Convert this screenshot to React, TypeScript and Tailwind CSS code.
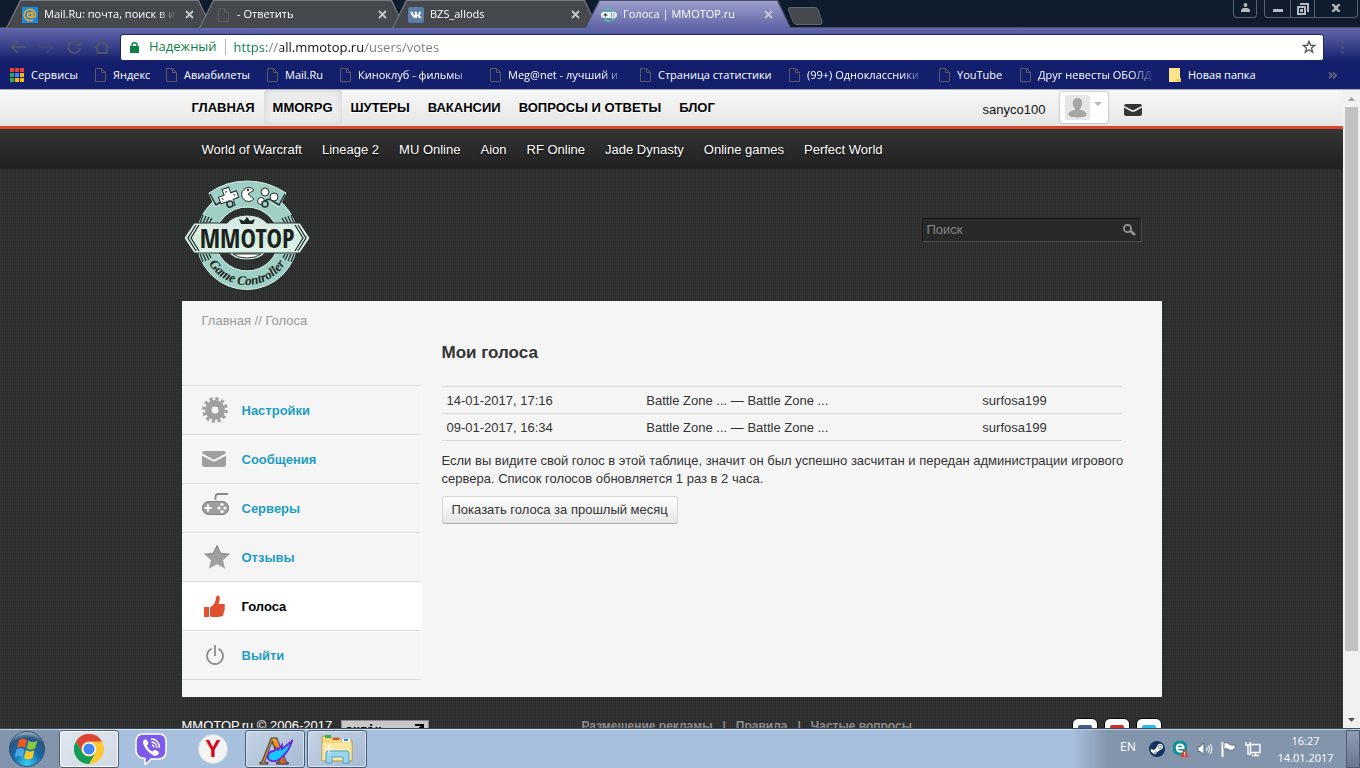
import type { ReactNode } from 'react';
import { FaSteamSymbol, FaVk } from 'react-icons/fa';

const uiFont = "font-['Open_Sans','Noto_Sans',sans-serif]";

const DocIcon = () => (
  <svg className="w-[11px] h-[14px] shrink-0" viewBox="0 0 11 14" fill="none" stroke="#5b5b5b">
    <path d="M.5 .5h6l4 4v9h-10z M6.5 .5v4h4" />
  </svg>
);

const MailRuIcon = () => (
  <svg className="w-4 h-4" viewBox="0 0 16 16">
    <rect width="16" height="16" rx="1" fill="#168de2" />
    <g fill="none" stroke="#ffa61a" strokeWidth="1.6">
      <circle cx="8" cy="8" r="2.4" />
      <path d="M10.4 5.4v3.4c0 2.2 3 2 3-.8a5.6 5.6 0 1 0-2.4 4.6" />
    </g>
  </svg>
);

const VkIcon = () => (
  <span className="w-4 h-4 rounded-[2px] bg-[#5b7fa6] flex items-center justify-center">
    <FaVk className="w-3 h-3 text-white" />
  </span>
);

const PadIcon = () => (
  <svg className="w-4 h-4" viewBox="0 0 16 16">
    <circle cx="8" cy="8" r="6" fill="none" stroke="#54b9a6" strokeWidth="2.4" strokeDasharray="6 2" />
    <rect x="0" y="5" width="16" height="6" rx="3" fill="#e4f7f0" />
    <path d="M2.5 8h4M4.5 6.3v3.4M10 7h1M12.500 7h1M10 9h1M12.500 9h1" stroke="#20302f" />
  </svg>
);

interface TabProps {
  icon: ReactNode;
  title: string;
  active?: boolean;
}

function BrowserTab({ icon, title, active }: TabProps) {
  return (
    <div
      className={`relative w-[206px] h-7 -ml-[13px] first:ml-0 shrink pt-px px-px [clip-path:polygon(14px_0,193px_0,206px_100%,0_100%)] ${
        active ? 'z-10 bg-[#4a4f6c]' : 'bg-[#777a80]'
      }`}
    >
      <div
        className={`h-full flex items-center pl-[15px] pr-[17px] text-white [clip-path:polygon(14px_0,191px_0,204px_100%,0_100%)] ${
          active ? 'bg-linear-to-b from-[#9c9fca] to-[#6165a8]' : 'bg-[#45484c]'
        }`}
      >
        <span className="w-4 flex justify-center shrink-0">{icon}</span>
        <span className="ml-[6px] flex-1 overflow-hidden whitespace-nowrap text-[11px] [mask-image:linear-gradient(90deg,#000_85%,transparent)]">
          {title}
        </span>
        <button aria-label="Закрыть вкладку" className="ml-2 shrink-0">
          <svg className="w-[9px] h-[9px]" viewBox="0 0 9 9" stroke="#c6c8cc" strokeWidth="1.8">
            <path d="M1 1l7 7M8 1l-7 7" />
          </svg>
        </button>
      </div>
    </div>
  );
}

function TabStrip() {
  return (
    <div className="flex h-7 bg-[#0f1c2e] border-b border-[#4b5068]">
      <div className="flex pl-[6px]">
        <BrowserTab icon={<MailRuIcon />} title="Mail.Ru: почта, поиск в и" />
        <BrowserTab icon={<DocIcon />} title=" - Ответить" />
        <BrowserTab icon={<VkIcon />} title="BZS_allods" />
        <BrowserTab icon={<PadIcon />} title="Голоса | MMOTOP.ru" active />
      </div>
      <button aria-label="Новая вкладка" className="mt-[7px] -ml-1 w-9 h-[18px]">
        <svg className="w-9 h-[18px]" viewBox="0 0 36 18">
          <path d="M3 .5h25q2 0 3 2l4 12q1 3-2 3H10q-3 0-4-3L1.500 3q-1-2.500 1.500-2.500z" fill="#45484c" stroke="#62666d" />
        </svg>
      </button>
      <div className="ml-auto mr-[2px] flex items-start">
        <button aria-label="Пользователь" className="w-6 h-[18px] mr-[7px] border border-t-0 border-[#59626f] rounded-b flex justify-center pt-[3px]">
          <svg className="w-[9px] h-[9px]" viewBox="0 0 9 9" fill="#b3b9c3">
            <circle cx="4.500" cy="2" r="1.900" />
            <path d="M0 9V7.500q0-2 2.500-2.500h4Q9 5.500 9 7.500V9z" />
          </svg>
        </button>
        <div className="flex h-[18px] border border-t-0 border-[#59626f] rounded-b">
          <button aria-label="Свернуть" className="w-[25px] flex justify-center">
            <span className="mt-[9px] w-[10px] h-[3px] bg-[#b3b9c3]" />
          </button>
          <button aria-label="Восстановить" className="w-[25px] flex justify-center border-x border-[#59626f] pt-[3px]">
            <svg className="w-3 h-3" viewBox="0 0 12 12" fill="none" stroke="#b3b9c3" strokeWidth="2">
              <path d="M4 2V1h7v7h-1" />
              <path d="M1 4h7v7H1zM4 7h1v1H4z" />
            </svg>
          </button>
          <button aria-label="Закрыть" className="w-[42px] flex justify-center pt-1">
            <svg className="w-[10px] h-2" viewBox="0 0 10 8" stroke="#b3b9c3" strokeWidth="2.400">
              <path d="M1.500 0l7 8M8.500 0l-7 8" />
            </svg>
          </button>
        </div>
      </div>
    </div>
  );
}

function Toolbar() {
  return (
    <div className="h-9 flex items-center pl-[10px] pt-[2px]">
      <div className="flex items-center gap-3 text-[#4f526c]">
        <button aria-label="Назад">
          <svg className="w-4 h-4" viewBox="0 0 16 16" fill="none" stroke="currentColor" strokeWidth="2">
            <path d="M15 8H2.500M8 2L2 8l6 6" />
          </svg>
        </button>
        <button aria-label="Вперёд" className="opacity-40">
          <svg className="w-4 h-4" viewBox="0 0 16 16" fill="none" stroke="currentColor" strokeWidth="2">
            <path d="M1 8h12.500M8 2l6 6-6 6" />
          </svg>
        </button>
        <button aria-label="Обновить">
          <svg className="w-4 h-4" viewBox="0 0 16 16" fill="none" stroke="currentColor" strokeWidth="2">
            <path d="M13 4.500A6 6 0 1 0 14 9" />
            <path d="M9 7h5.500V1.500z" fill="currentColor" stroke="none" />
          </svg>
        </button>
        <button aria-label="Домашняя страница">
          <svg className="w-4 h-4" viewBox="0 0 16 16" fill="none" stroke="currentColor" strokeWidth="2">
            <path d="M1 9L8 2l7 7M3.500 8v6h9V8" />
          </svg>
        </button>
      </div>
      <div className="ml-[10px] flex-1 h-[27px] flex items-center bg-white border border-[#1d2463] rounded-[3px] pl-[9px]">
        <svg className="w-[9px] h-[11px]" viewBox="0 0 9 11">
          <path d="M0 4h9v7H0z" fill="#0b8043" />
          <path d="M2 5V3q0-2.300 2.500-2.300T7 3v2" fill="none" stroke="#0b8043" strokeWidth="1.400" />
        </svg>
        <span className="ml-[10px] text-[13px] text-[#0b8043]">Надежный</span>
        <span className="mx-2 w-px h-4 bg-[#b9b9b9]" />
        <input
          aria-label="Адресная строка"
          defaultValue="https://all.mmotop.ru/users/votes"
          className="flex-1 min-w-0 h-full text-[13px] outline-none text-transparent bg-clip-text bg-[linear-gradient(90deg,#0b8043_33px,#7b7b7b_33px,#7b7b7b_46px,#111_46px,#111_130px,#7b7b7b_130px)]"
        />
        <button aria-label="Добавить в закладки" className="mr-[7px]">
          <svg className="w-[14px] h-[14px]" viewBox="0 0 14 14" fill="none" stroke="#555" strokeWidth="1.300">
            <path d="M7 1.300l1.600 4h4.200L9.500 8l1.200 4.300L7 9.800l-3.700 2.500L4.500 8 1.200 5.300h4.200z" />
          </svg>
        </button>
      </div>
      <button aria-label="Меню" className="w-9 flex justify-center">
        <svg className="w-[3px] h-[13px]" viewBox="0 0 3 13" fill="#4d5070">
          <circle cx="1.500" cy="1.500" r="1.500" />
          <circle cx="1.500" cy="6.500" r="1.500" />
          <circle cx="1.500" cy="11.500" r="1.500" />
        </svg>
      </button>
    </div>
  );
}

const bookmarks = [
  { label: 'Яндекс', width: 'w-[71px]' },
  { label: 'Авиабилеты', width: 'w-[101px]' },
  { label: 'Mail.Ru', width: 'w-[73px]' },
  { label: 'Киноклуб - фильмы', width: 'w-[150px]', fade: true },
  { label: 'Meg@net - лучший и', width: 'w-[150px]', fade: true },
  { label: 'Страница статистики', width: 'w-[149px]' },
  { label: '(99+) Одноклассники', width: 'w-[150px]', fade: true },
  { label: 'YouTube', width: 'w-[81px]' },
  { label: 'Друг невесты ОБОЛД', width: 'w-[149px]', fade: true },
];

function BookmarksBar() {
  return (
    <div className="h-[25px] flex items-center pl-[10px] pb-[3px] text-[11px] text-white whitespace-nowrap overflow-hidden">
      <a href="#" className="flex items-center w-[85px] shrink-0">
        <svg className="w-[14px] h-[14px] mr-[7px]" viewBox="0 0 14 14">
          <path d="M0 0h4v4H0zM5 0h4v4H5zM10 0h4v4h-4z" fill="#ea4335" />
          <path d="M0 5h4v4H0zM0 10h4v4H0z" fill="#34a853" />
          <path d="M5 5h4v4H5z" fill="#4285f4" />
          <path d="M10 5h4v4h-4zM5 10h4v4H5zM10 10h4v4h-4z" fill="#fbbc05" />
        </svg>
        Сервисы
      </a>
      {bookmarks.map((b) => (
        <a key={b.label} href="#" className={`flex items-center shrink-0 pr-[14px] ${b.width}`}>
          <DocIcon />
          <span
            className={`ml-[7px] ${
              b.fade ? 'flex-1 overflow-hidden [mask-image:linear-gradient(90deg,#000_80%,transparent)]' : ''
            }`}
          >
            {b.label}
          </span>
        </a>
      ))}
      <a href="#" className="flex items-center shrink-0">
        <svg className="w-3 h-[14px] mr-[7px]" viewBox="0 0 12 14">
          <path d="M0 0h11v10h1v4H0z" fill="#ffe48a" />
          <path d="M8 14v-3h4v3z" fill="#f2c744" />
        </svg>
        Новая папка
      </a>
      <button aria-label="Другие закладки" className="ml-auto mr-[23px]">
        <svg className="w-[9px] h-[7px]" viewBox="0 0 9 7" fill="none" stroke="#62637a" strokeWidth="1.800">
          <path d="M1 .5l3 3-3 3M5 .5l3 3-3 3" />
        </svg>
      </button>
    </div>
  );
}

const mainMenu = ['ГЛАВНАЯ', 'MMORPG', 'ШУТЕРЫ', 'ВАКАНСИИ', 'ВОПРОСЫ И ОТВЕТЫ', 'БЛОГ'];
const games = ['World of Warcraft', 'Lineage 2', 'MU Online', 'Aion', 'RF Online', 'Jade Dynasty', 'Online games', 'Perfect World'];

const Envelope = ({ className, line }: { className: string; line: string }) => (
  <svg className={className} viewBox="0 0 24 16" fill="currentColor">
    <rect width="24" height="16" rx="3" />
    <path d="M0 3.500l9.500 5.200q2.500 1.400 5 0L24 3.500" fill="none" stroke={line} strokeWidth="2" />
  </svg>
);

function SiteHeader() {
  return (
    <header>
      <div className="h-[39px] bg-linear-to-b from-[#f7f7f7] to-[#e6e6e6] border-b-3 border-[#dd4529]">
        <div className="w-[980px] max-w-full mx-auto h-full flex">
          <nav className="flex h-[35px] pl-px">
            {mainMenu.map((item) => (
              <a
                key={item}
                href="#"
                className={`px-[9px] text-[13px] leading-9 font-bold text-black [text-shadow:0_1px_0_#fff] ${
                  item === 'MMORPG' ? 'rounded-[3px] bg-[#ececec] shadow-[inset_0_0_6px_#cfcfcf]' : ''
                }`}
              >
                {item}
              </a>
            ))}
          </nav>
          <div className="ml-auto mr-5 flex items-start">
            <a href="#" className="mr-[14px] text-[13px] leading-10 text-[#111]">
              sanyco100
            </a>
            <button
              aria-label="Профиль"
              className="mt-[2px] w-12 h-[31px] flex items-start bg-white rounded-[3px] pl-[5px] pt-[3px] shadow-[0_0_2px_#777]"
            >
              <svg className="w-[25px] h-[25px]" viewBox="0 0 25 25">
                <rect width="25" height="25" rx="3" fill="#e6e6e6" />
                <path
                  d="M12.500 3c3 0 4.700 2 4.700 5 0 2.300-1 4.300-2.400 5.400v1.400c4 .9 6.700 2.300 6.700 4.700 0 2-4 2.900-9 2.900s-9-.9-9-2.900c0-2.400 2.700-3.800 6.700-4.700v-1.400C8.800 12.300 7.800 10.300 7.800 8c0-3 1.700-5 4.700-5z"
                  fill="#a5a5a5"
                />
              </svg>
              <svg className="ml-1 mt-[7px] w-2 h-1" viewBox="0 0 8 4" fill="#b5b5b5">
                <path d="M0 0h8L4 4z" />
              </svg>
            </button>
            <button aria-label="Сообщения" className="mt-[14px] ml-4 text-[#353535]">
              <Envelope className="w-[18px] h-3" line="#f0f0f0" />
            </button>
          </div>
        </div>
      </div>
      <div className="h-10 bg-linear-to-b from-[#353535] to-[#212121]">
        <nav className="w-[980px] max-w-full mx-auto px-[10px] flex">
          {games.map((game) => (
            <a key={game} href="#" className="px-[10px] text-[13px] leading-[42px] text-white whitespace-nowrap [text-shadow:0_1px_2px_#000]">
              {game}
            </a>
          ))}
        </nav>
      </div>
    </header>
  );
}

function Logo() {
  return (
    <svg className="w-[132px] h-[120px]" viewBox="0 0 132 120" role="img" aria-label="MMOTOP Game Controller">
      <defs>
        <linearGradient id="plate" x1="0" y1="0" x2="0" y2="1">
          <stop offset="0" stopColor="#cfe5dc" />
          <stop offset=".5" stopColor="#e3f4ec" />
          <stop offset=".52" stopColor="#cdebdc" />
          <stop offset="1" stopColor="#e0f5e9" />
        </linearGradient>
        <path id="arc" d="M23 80A45 45 0 0 0 107 80" />
      </defs>
      <circle cx="65" cy="63" r="41" fill="none" stroke="#9fd0c5" strokeWidth="19" />
      <circle cx="65" cy="63" r="50.500" fill="none" stroke="#d2ebe4" />
      <circle cx="65" cy="63" r="32" fill="none" stroke="#d2ebe4" />
      {/* top plate with the pad buttons */}
      <path d="M27 17Q44 5 65 5T104 17l-7 14-12-8q-20-3-40 0l-12 8z" fill="#9fd0c5" />
      <path d="M27 17Q44 5 65 5T104 17l-7 14-9-5M27 17l6 14 9-5" fill="none" stroke="#d2ebe4" />
      <path d="M28 18l6 11 8-5q3-2 6 1v6M103 18l-6 11-8-5q-3-2-6 1v6" fill="none" stroke="#26302f" strokeWidth="1.500" />
      <g transform="rotate(-20 46 21)" fill="#fff" stroke="#26302f">
        <path d="M43 12h7v6h6v7h-6v6h-7v-6h-6v-7h6z" />
        <path d="M46 15v1M46 27v1M40 21h1M52 21h1" strokeWidth="2" />
      </g>
      <path d="M66 18l6-4a7 7 0 1 0 0 9z" fill="#fff" stroke="#26302f" />
      <circle cx="66" cy="14" r="1.200" fill="#26302f" />
      <g fill="#fff" stroke="#26302f">
        <circle cx="83" cy="16" r="4" />
        <circle cx="92" cy="21" r="4" />
        <circle cx="79" cy="25" r="3.500" />
      </g>
      <g fill="#9fd0c5" stroke="#26302f" strokeWidth="1.500">
        <circle cx="48" cy="28" r="3" />
        <circle cx="83" cy="28" r="3" />
      </g>
      {/* notches next to the plate */}
      <path
        d="M18 47l3-8M21 47l3-7M24 47l3-6M27 47l3-5M112 47l-3-8M109 47l-3-7M106 47l-3-6M103 47l-3-5M18 78l3 8M21 78l3 7M24 78l3 6M27 78l2 4M112 78l-3 8M109 78l-3 7M106 78l-3 6M103 78l-2 4"
        stroke="#26302f"
        strokeWidth="1.300"
      />
      <path d="M46 76q6 8 19 8t19-8z" fill="#dff0e8" stroke="#2a3231" />
      <path d="M51 78q5 4 14 4t14-4z" fill="#fff" stroke="#2a3231" />
      <path
        d="M2 62l10-15h33q7-8 20-8t20 8h33l10 15-10 15H12z"
        fill="url(#plate)"
        stroke="#2a3231"
        strokeWidth="1"
      />
      <path d="M14 49L6 62l8 13M17 49L9 62l8 13M116 49l8 13-8 13M113 49l8 13-8 13" fill="none" stroke="#26302f" strokeWidth="1.300" />
      <path d="M59 48l-2-5 5 2 3-4 3 4 5-2-2 5z" fill="#1d2423" />
      <text x="65" y="72" textAnchor="middle" fontSize="26" fontWeight="700" fill="#1d2120" fontFamily="'Liberation Sans Narrow','Open Sans Condensed','Liberation Sans',sans-serif">
        MMOTOP
      </text>
      <text fontSize="13" fontStyle="italic" fontWeight="700" fill="#1d2120" fontFamily="'Liberation Serif',serif">
        <textPath href="#arc" startOffset="50%" textAnchor="middle">
          Game Controller
        </textPath>
      </text>
    </svg>
  );
}

const icons: Record<string, ReactNode> = {
  settings: (
    <svg className="w-[26px] h-[26px]" viewBox="0 0 26 26">
      <circle cx="13" cy="13" r="6.700" fill="none" stroke="#9f9f9f" strokeWidth="6.500" />
      <circle cx="13" cy="13" r="11.300" fill="none" stroke="#9f9f9f" strokeWidth="3.200" strokeDasharray="3.200 2.717" />
    </svg>
  ),
  messages: <Envelope className="w-6 h-4 text-[#9f9f9f]" line="#f6f6f6" />,
  servers: (
    <svg className="w-[27px] h-6 -mt-2" viewBox="0 0 27 24">
      <path d="M13.500 8V5q0-3 3-3H26" fill="none" stroke="#8a8a8a" strokeWidth="1.800" />
      <rect y="9" width="27" height="14" rx="7" fill="#9f9f9f" />
      <rect x=".5" y="9.500" width="26" height="13" rx="6.500" fill="none" stroke="#808080" />
      <path d="M2.500 16h7M6 12.500v7" stroke="#fff" strokeWidth="2" />
      <g fill="#fff">
        <circle cx="20" cy="12.500" r="1.600" />
        <circle cx="20" cy="19.500" r="1.600" />
        <circle cx="17" cy="16" r="1.600" />
        <circle cx="23" cy="16" r="1.600" />
      </g>
    </svg>
  ),
  reviews: (
    <svg className="w-[26px] h-6 ml-[2px]" viewBox="0 0 26 24">
      <path d="M13 .5l3.800 8 8.700.7-6.500 6 2 8.300-8-4.300-8 4.300 2-8.300-6.500-6 8.700-.7z" fill="#9f9f9f" />
      <path d="M13 .5l3.800 8 8.700.7M.5 9.200l8.700-.7L13 .5" fill="none" stroke="#7e7e7e" />
    </svg>
  ),
  votes: (
    <svg className="w-[21px] h-[23px] ml-[2px]" viewBox="0 0 21 23" fill="#e2502f">
      <path d="M0 12h5v10H0zM6 12.500c3.500-2 5.500-5 6-9C12.300.5 13.500 0 15 1c1.600 1.500.5 5.500-.5 8H20c1.500.5 1.300 2.500.3 3 1 .8.800 2.600-.3 3 .8.900.4 2.500-.6 3 .3 1-.1 2.700-1.400 3.300-2.500 1.100-8.500 1-12 .2z" />
    </svg>
  ),
  logout: (
    <svg className="w-[18px] h-5 ml-1" viewBox="0 0 18 20" fill="none" stroke="#8c8c8c" strokeWidth="1.800">
      <path d="M9 0v11M5.500 3.800a8 8 0 1 0 7 0" />
    </svg>
  ),
};

const sideMenu = [
  { id: 'settings', label: 'Настройки' },
  { id: 'messages', label: 'Сообщения' },
  { id: 'servers', label: 'Серверы' },
  { id: 'reviews', label: 'Отзывы' },
  { id: 'votes', label: 'Голоса' },
  { id: 'logout', label: 'Выйти' },
];

const votes = [
  { date: '14-01-2017, 17:16', server: 'Battle Zone ... — Battle Zone ...', nick: 'surfosa199' },
  { date: '09-01-2017, 16:34', server: 'Battle Zone ... — Battle Zone ...', nick: 'surfosa199' },
];

function VotesPage() {
  const active = 'votes';

  return (
    <div className="bg-[#f5f5f5] pb-[17px] text-[13px] leading-[18px] text-[#333]">
      <div className="px-5 pt-[11px] text-[#999]">
        <a href="#">Главная</a> // <span>Голоса</span>
      </div>
      <div className="flex gap-5">
        <nav className="w-60 shrink-0 mt-[55px] border-t border-[#d9d9d9] border-r border-r-white">
          {sideMenu.map((item) => (
            <a
              key={item.id}
              href="#"
              className={`h-[49px] flex items-center pl-5 pt-[2px] border-b border-[#d9d9d9] font-bold [text-shadow:0_1px_0_#fff] ${
                item.id === active ? 'bg-white text-black' : 'text-[#1b9cc0] shadow-[inset_0_1px_0_#fff]'
              }`}
            >
              <span className="w-10 flex pb-[2px]">{icons[item.id]}</span>
              {item.label}
            </a>
          ))}
        </nav>
        <main className="flex-1 mr-10">
          <h1 className="mt-[11px] text-[17px] leading-6 font-bold">Мои голоса</h1>
          <table className="mt-[21px] w-full border-t border-[#d9d9d9]">
            <tbody>
              {votes.map((vote) => (
                <tr key={vote.date} className="h-[27px] border-b border-[#d9d9d9]">
                  <td className="w-[27%] pl-[5px] pt-[2px]">{vote.date}</td>
                  <td className="w-[33%] pt-[2px] text-center">{vote.server}</td>
                  <td className="w-[40%] pt-[2px] text-center pl-[58px]">{vote.nick}</td>
                </tr>
              ))}
            </tbody>
          </table>
          <p className="mt-[11px] -mr-3">
            Если вы видите свой голос в этой таблице, значит он был успешно засчитан и передан администрации игрового сервера. Список
            голосов обновляется 1 раз в 2 часа.
          </p>
          <button className="mt-2 h-7 px-[9px] rounded-[3px] border border-[#d5d5d5] border-b-[#b0b0b0] bg-linear-to-b from-white to-[#e6e6e6]">
            Показать голоса за прошлый месяц
          </button>
        </main>
      </div>
    </div>
  );
}

function SiteFooter() {
  return (
    <footer className="flex items-start pt-5 h-14 text-[13px] leading-[18px] whitespace-nowrap">
      <span className="text-white w-[159px]">MMOTOP.ru © 2006-2017</span>
      <span className="mt-[3px] w-[88px] h-[31px] bg-[#c8c8c8] border border-[#8a8a8a] text-black px-1 flex justify-between font-bold font-['DejaVu_Sans_Mono',monospace] text-[12px]">
        андін
        <svg className="w-[10px] h-[10px] mt-[3px]" viewBox="0 0 10 10" stroke="#000" strokeWidth="2" fill="none">
          <path d="M1 1h8v8M9 1L1 9" />
        </svg>
      </span>
      <nav className="ml-[153px] flex gap-[10px] text-[12px] font-bold text-[#8c8c8c]">
        <a href="#">Размещение рекламы</a>|<a href="#">Правила</a>|<a href="#">Частые вопросы</a>
      </nav>
      <div className="ml-auto flex gap-[6px] mt-px">
        {['bg-[#435a8b]', 'bg-[#cf2f2b]', 'bg-[#25bdf0]'].map((color) => (
          <a key={color} href="#" aria-label="Мы в соцсетях" className="w-[26px] h-[26px] rounded-[6px] bg-white border border-black flex justify-center pt-[6px]">
            <span className={`w-[14px] h-[14px] rounded-[2px] ${color}`} />
          </a>
        ))}
      </div>
    </footer>
  );
}

function Scrollbar() {
  return (
    <div className="w-[17px] shrink-0 flex flex-col items-center bg-[#f1f1f1]">
      <button aria-label="Вверх" className="h-[17px]">
        <svg className="w-[7px] h-1" viewBox="0 0 7 4" fill="#a3a3a3">
          <path d="M0 4h7L3.500 0z" />
        </svg>
      </button>
      <div className="flex-1 w-[13px]">
        <div className="h-[90%] bg-[#c1c1c1]" />
      </div>
      <button aria-label="Вниз" className="h-[17px]">
        <svg className="w-[7px] h-1" viewBox="0 0 7 4" fill="#505050">
          <path d="M0 0h7L3.500 4z" />
        </svg>
      </button>
    </div>
  );
}

const ChromeIcon = () => (
  <svg className="w-[30px] h-[30px]" viewBox="0 0 30 30">
    <circle cx="15" cy="15" r="15" fill="#fcc934" />
    <path d="M2 7.500A15 15 0 0 1 28 7.500H15A7.500 7.500 0 0 0 8.500 18.700z" fill="#db4437" />
    <path d="M2 7.500l6.500 11.200A7.500 7.500 0 0 0 21.500 18.700L15 30A15 15 0 0 1 2 7.500z" fill="#0f9d58" />
    <circle cx="15" cy="15" r="7" fill="#fff" />
    <circle cx="15" cy="15" r="5.600" fill="#4285f4" />
  </svg>
);

const ViberIcon = () => (
  <svg className="w-8 h-8" viewBox="0 0 32 32">
    <path d="M8 1h16q7 0 7 8v9q0 8-8 8h-7l-6 6v-6.500Q1 25 1 17V9q0-8 7-8z" fill="#7d5bea" stroke="#fff" strokeWidth="1.500" />
    <path d="M9 7q2-2 4 2 1 2-1 3.500 1 4 5.500 6 1.500-2.500 4-1 3.500 2 2 3.500-2 2.500-5 1.500Q10.500 18 8 10q0-2 1-3z" fill="#fff" />
    <path d="M16 6q8 0 8.500 9M16.500 9q5 .5 5.500 6M17 12q2 .3 2.200 2.500" fill="none" stroke="#fff" strokeWidth="1.300" />
  </svg>
);

const YandexIcon = () => (
  <svg className="w-[30px] h-[30px]" viewBox="0 0 30 30">
    <circle cx="15" cy="15" r="14.500" fill="#f4f4f4" stroke="#d5d8dc" />
    <text x="15" y="23" textAnchor="middle" fontSize="23" fontWeight="700" fill="#d6091a" fontFamily="'Liberation Sans',sans-serif">
      Y
    </text>
  </svg>
);

const AllodsIcon = () => (
  <svg className="w-9 h-9" viewBox="0 0 36 36">
    <defs>
      <linearGradient id="gold" x1="0" y1="0" x2="1" y2="1">
        <stop offset="0" stopColor="#ffd84a" />
        <stop offset=".5" stopColor="#f08a16" />
        <stop offset="1" stopColor="#c04a08" />
      </linearGradient>
    </defs>
    <text x="17" y="33" textAnchor="middle" fontSize="40" fontWeight="700" fill="url(#gold)" stroke="#34405a" fontFamily="'Liberation Serif',serif">
      A
    </text>
    <path d="M35 10q-3 10-9 15-5 6-11 5-5-1-4-5 1-5 6-5l2-3 2 2 4-5v4z" fill="#19c8ff" stroke="#6a25d8" strokeWidth="1.800" />
  </svg>
);

const ExplorerIcon = () => (
  <svg className="w-8 h-[30px]" viewBox="0 0 32 30">
    <path d="M1 3q0-1 1-1h7l2 2h7l2 2h10q1 0 1 1v19q0 1-1 1H2q-1 0-1-1z" fill="#f0d77c" stroke="#b99a42" />
    <path d="M4 1h6v3H4z" fill="#35b34a" />
    <path d="M12 4h6v2h-6z" fill="#d8442f" />
    <path d="M21 5h8v3h-8z" fill="#fff" />
    <path d="M23 5h4v2h-4z" fill="#2c8ce0" />
    <path d="M1.500 9h29v17h-29z" fill="#f9e9a4" />
    <path d="M5 29V19q0-2 2-2h19q2 0 2 2v10h-6v-6H11v6z" fill="#9bd6ef" stroke="#4e9fc4" />
    <path d="M8 11v8M4 15h8" stroke="#fff" />
  </svg>
);

const apps = [
  { name: 'Google Chrome', icon: <ChromeIcon />, style: 'border-[#4b5c73] from-[#dfe6ee] to-[#d0dae7] shadow-[inset_0_0_0_1px_#fff]' },
  { name: 'Viber', icon: <ViberIcon />, style: 'border-transparent' },
  { name: 'Яндекс', icon: <YandexIcon />, style: 'border-transparent' },
  { name: 'Аллоды Онлайн', icon: <AllodsIcon />, style: 'border-[#4b5c73] from-[#c5d4e5] to-[#a6bad3] shadow-[inset_0_0_0_1px_#d6e3f1]' },
  { name: 'Проводник', icon: <ExplorerIcon />, style: 'border-[#4b5c73] from-[#c5d4e5] to-[#a6bad3] shadow-[inset_0_0_0_1px_#d6e3f1]' },
];

function Taskbar() {
  return (
    <div className={`h-10 shrink-0 flex bg-[#a7c0dd] border-t border-[#3f4c60] text-white ${uiFont}`}>
      <button aria-label="Пуск" className="w-[59px] flex items-center justify-center bg-[#8395ad] pr-[5px] border-t border-[#bccbdc]">
        <svg className="w-9 h-9" viewBox="0 0 36 36">
          <defs>
            <radialGradient id="orb" cx=".5" cy=".9" r=".9">
              <stop offset="0" stopColor="#35d0f5" />
              <stop offset=".45" stopColor="#1568a8" />
              <stop offset=".8" stopColor="#2b5680" />
              <stop offset="1" stopColor="#a9c0d3" />
            </radialGradient>
          </defs>
          <circle cx="18" cy="18" r="17.500" fill="url(#orb)" stroke="#30506f" />
          <path d="M10 9q4-3 8 0l-2 8q-4-3-8 0z" fill="#ee5a24" />
          <path d="M19.500 9.500q4 3 9 0l-2.500 8q-4 2.500-8.500 0z" fill="#8cc63e" />
          <path d="M7.500 18.500q4-3 8 0l-2 8q-4-3-8 0z" fill="#4aa8ea" />
          <path d="M17 19q4 3 8.500 0l-2 8q-4.500 2.500-8.500 0z" fill="#fbc925" />
        </svg>
      </button>
      <div className="flex-1 flex gap-[2px] border-t border-[#d3e1f0]">
        {apps.map((app) => (
          <button
            key={app.name}
            aria-label={app.name}
            className={`w-[60px] h-[38px] flex items-center justify-center rounded-[3px] border bg-linear-to-br ${app.style}`}
          >
            {app.icon}
          </button>
        ))}
      </div>
      <div className="flex items-center pl-[48px] border-t border-[#c0cddc] bg-[linear-gradient(90deg,#a7c0dd_0,#8395ad_36px)]">
        <span className="text-[12px] w-[29px] pb-1">EN</span>
        <div className="flex items-center gap-2">
          <span className="w-4 h-4 rounded-full bg-[#12335f] flex items-center justify-center">
            <FaSteamSymbol className="w-[14px] h-[14px]" />
          </span>
          <svg className="w-4 h-4" viewBox="0 0 16 16">
            <rect width="14" height="14" rx="5" fill="#0b9297" />
            <path d="M4 7h6.500q0-3.500-3.500-3.500T3.800 7 7 10.500h2.500" fill="none" stroke="#fff" strokeWidth="2" />
            <path d="M11.500 8l4.500 8H7z" fill="#e8402f" />
            <path d="M11.500 11v2.500M11.500 14v1" stroke="#fff" />
          </svg>
          <svg className="w-4 h-4" viewBox="0 0 16 16" fill="none" stroke="#fff">
            <path d="M1 5.500h2L7 2v12l-4-3.500H1z" fill="#fff" stroke="#54647a" />
            <path d="M9.500 6q1.200 2 0 4M11.500 4.500q2 3.500 0 7M13.500 3q3 5 0 10" />
          </svg>
          <svg className="w-4 h-4" viewBox="0 0 16 16">
            <path d="M1.500 1v15" stroke="#fff" strokeWidth="2" />
            <path d="M3 2q3-1 5 1t7 1q-1 4-3 5-3 .8-5-.7t-4 .2z" fill="#fff" stroke="#4f5f75" strokeWidth=".7" />
          </svg>
          <svg className="w-4 h-4" viewBox="0 0 16 16" fill="none" stroke="#fff" strokeWidth="1.400">
            <path d="M5.500 3.500H15v8H5.500zM7 14.500h7M10.500 12v2" />
            <path d="M1 1v3h4V1M3 4v9h3" />
          </svg>
        </div>
        <div className="w-[85px] pl-1 text-center text-[11px] leading-[17px]">
          <div>16:27</div>
          <div>14.01.2017</div>
        </div>
        <button aria-label="Свернуть все окна" className="w-[14px] h-[38px] border border-[#4d5c70] bg-linear-to-b from-[#8f9db1] to-[#67778e]" />
      </div>
    </div>
  );
}

export default function App() {
  return (
    <div className="h-screen flex flex-col overflow-hidden font-['Liberation_Sans',Arial,sans-serif]">
      <div className={`shrink-0 ${uiFont}`}>
        <TabStrip />
        <div className="bg-[linear-gradient(180deg,#6367ab_0,#131f6c_34px)] border-b border-[#a9abb8]">
          <Toolbar />
          <BookmarksBar />
        </div>
      </div>
      <div className="flex-1 min-h-0 flex">
        <div className="flex-1 min-w-0 overflow-hidden bg-[#333535] bg-[repeating-linear-gradient(90deg,#0000_0_1px,#00000024_1px_2px),repeating-linear-gradient(0deg,#00000010_0_1px,#0000_1px_3px)]">
          <SiteHeader />
          <div className="w-[980px] max-w-full mx-auto">
            <div className="h-[132px] flex items-start justify-between">
              <a href="#" className="mt-[7px]">
                <Logo />
              </a>
              <form className="mt-[49px] mr-5 w-[220px] h-6 flex items-center bg-[#292929] border border-[#4a4c4c] border-t-[#141414] border-l-[#1c1c1c]">
                <input
                  type="text"
                  aria-label="Поиск"
                  placeholder="Поиск"
                  className="flex-1 min-w-0 pl-1 text-[13px] text-[#8a8a8a] placeholder:text-[#858585] outline-none"
                />
                <button type="button" aria-label="Найти" className="mr-[5px]">
                  <svg className="w-[13px] h-3" viewBox="0 0 13 12" fill="none" stroke="#8f979b">
                    <circle cx="4.500" cy="4.500" r="3.600" strokeWidth="1.700" />
                    <path d="M7.500 7l4.500 4" strokeWidth="2.400" />
                  </svg>
                </button>
              </form>
            </div>
            <VotesPage />
            <SiteFooter />
          </div>
        </div>
        <Scrollbar />
      </div>
      <Taskbar />
    </div>
  );
}
